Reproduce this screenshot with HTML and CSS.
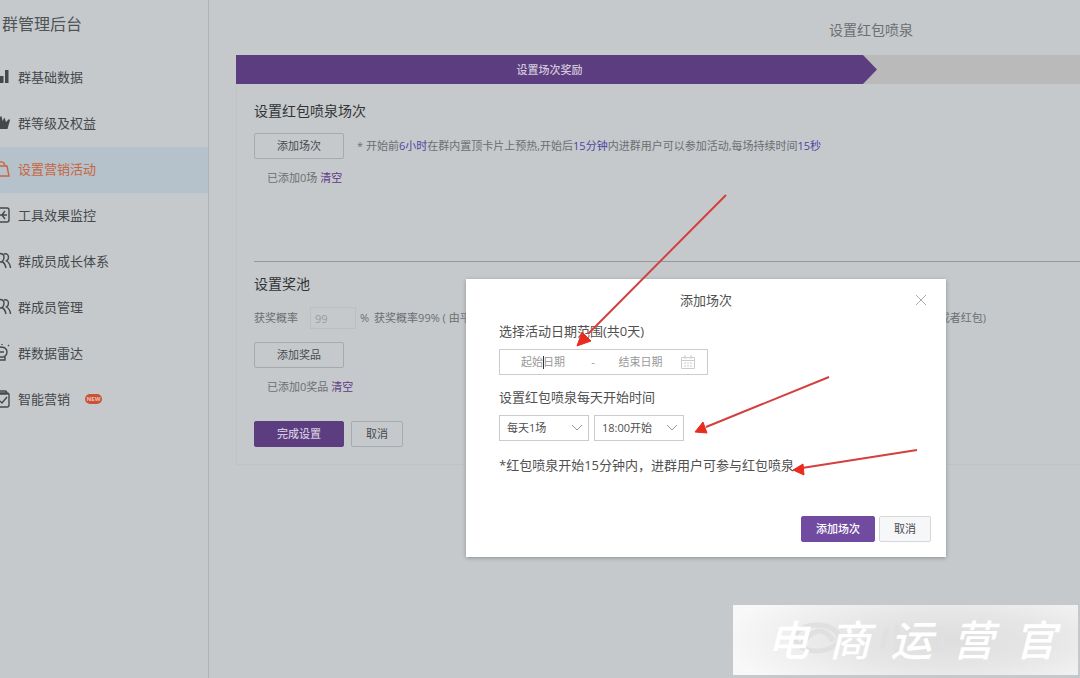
FILE: index.html
```html
<!DOCTYPE html>
<html lang="zh-CN">
<head>
<meta charset="utf-8">
<title>群管理后台</title>
<link rel="stylesheet" href="styles.css">
</head>
<body>
<div class="app">
  <aside class="sidebar">
    <h1 class="brand">群管理后台</h1>
    <nav class="menu">
      <a class="item" href="#"><svg class="icon solid" viewBox="0 0 12 18"><path d="M0 8h3.500v7H0zM5 2h3.500v13H5z"/></svg>群基础数据</a>
      <a class="item" href="#"><svg class="icon solid" viewBox="0 0 12 18"><path d="M0 7L0 3l1.500-1 1 5 2-3.500L6 8l3-3 1 1-2.500 9H0z"/></svg>群等级及权益</a>
      <a class="item active" href="#"><svg class="icon" viewBox="0 0 12 18"><path d="M0 6h7l2 10H0M0 2q4-1 5 4"/></svg>设置营销活动</a>
      <a class="item" href="#"><svg class="icon" viewBox="0 0 12 18"><path d="M0 2h7q2 0 2 2v10q0 2-2 2H0M0 9h7M2 9l3-4M2 9l3 4"/></svg>工具效果监控</a>
      <a class="item" href="#"><svg class="icon" viewBox="0 0 12 18"><path d="M0 1.500q4 0 4 4Q4 8 2 9.500 5 11 6 16M4 2q4-1 4.500 3Q8.500 8 6.500 9 10 11 10.500 16M0 10h2"/></svg>群成员成长体系</a>
      <a class="item" href="#"><svg class="icon" viewBox="0 0 12 18"><path d="M0 1.500q4 0 4 4Q4 8 2 9.500 5 11 6 16M4 2q4-1 4.500 3Q8.500 8 6.500 9 10 11 10.500 16M0 10h2"/></svg>群成员管理</a>
      <a class="item" href="#"><svg class="icon" viewBox="0 0 12 18"><path d="M0 3q7 0 7 5 0 3-2 4v4H0M0 8h4M0 13h5M8 2l1-1M2 1V0"/></svg>群数据雷达</a>
      <a class="item" href="#"><svg class="icon" viewBox="0 0 12 18"><path d="M0 3h7q2 0 2 2v10q0 2-2 2H0M0 1h5q2 0 2 3H0M0 11l2 2 5-6"/></svg>智能营销<span class="new">NEW</span></a>
    </nav>
  </aside>
  <main class="main">
    <div class="content">
      <h2 class="page-title">设置红包喷泉</h2>
      <div class="steps"><div class="step">设置场次奖励</div></div>
      <div class="panel">
        <section class="sessions">
          <h3>设置红包喷泉场次</h3>
          <div class="row">
            <button class="btn wide">添加场次</button>
            <p>* 开始前<em>6小时</em>在群内置顶卡片上预热,开始后<em>15分钟</em>内进群用户可以参加活动,每场持续时间<em>15秒</em></p>
          </div>
          <p class="added">已添加0场 <a href="#">清空</a></p>
        </section>
        <section class="pool">
          <h3>设置奖池</h3>
          <div class="rate">
            <label for="rate">获奖概率</label>
            <input id="rate" value="99" disabled>
            <span>%</span>
            <p class="rate-note"><span>获奖概率99% ( 由平台</span><span>或者红包)</span></p>
          </div>
          <button class="btn wide">添加奖品</button>
          <p class="added">已添加0奖品 <a href="#">清空</a></p>
          <div class="actions"><button class="btn wide primary">完成设置</button><button class="btn">取消</button></div>
        </section>
      </div>
    </div>
  </main>
</div>

<div class="modal" role="dialog" aria-labelledby="modal-title">
  <header class="modal-head">
    <h2 id="modal-title">添加场次</h2>
    <button class="close" aria-label="关闭"><svg viewBox="0 0 10 10"><path d="M0 0l10 10M10 0L0 10"/></svg></button>
  </header>
  <div class="modal-body">
    <label for="start">选择活动日期范围(共0天)</label>
    <div class="range">
      <span class="start-field"><input id="start" placeholder="起始日期"></span>
      <span class="dash">-</span>
      <input class="end" aria-label="结束日期" placeholder="结束日期">
      <svg class="calendar" viewBox="0 0 14 14"><path d="M.5 2.500h13v11H.5zM.5 5.500h13M4 0v4M10 0v4M3 8h2M6 8h2M9 8h2M3 11h2M6 11h2M9 11h2"/></svg>
    </div>
    <label for="count">设置红包喷泉每天开始时间</label>
    <div class="selects">
      <span class="select"><select id="count"><option>每天1场</option></select><svg viewBox="0 0 12 8"><path d="M1 1l5 5 5-5"/></svg></span>
      <span class="select"><select aria-label="开始时间"><option>18:00开始</option></select><svg viewBox="0 0 12 8"><path d="M1 1l5 5 5-5"/></svg></span>
    </div>
    <p>*红包喷泉开始15分钟内，进群用户可参与红包喷泉</p>
  </div>
  <footer class="modal-foot"><button class="btn primary">添加场次</button><button class="btn light">取消</button></footer>
</div>

<svg class="arrows" viewBox="0 0 1080 678">
  <path class="line" d="M726 195L588 334M829 377L706 427M917 450L802 468"/>
  <path class="head" d="M577 346L582 332 591 341zM695 432L703 422 707 433zM793 470L803 464 804 475z"/>
</svg>

<div class="watermark">
  <svg class="ghost" viewBox="0 0 345 70"><ellipse cx="84" cy="33" rx="22" ry="13"/><path d="M66 43q20-30 34-7M154 24l-5 20M164 20v28M176 24l5 18M190 25h20v20h-20z"/></svg>
  <span>电</span><span>商</span><span>运</span><span>营</span><span>官</span>
</div>
</body>
</html>
```
FILE: styles.css
```css
* { box-sizing: border-box; }
body, h1, h2, h3, p { margin: 0; font-weight: 400; }
body {
  position: relative;
  min-height: 100vh;
  overflow: hidden;
  background: #c5c9cc;
  color: #6c6e71;
  font: 11px/16px "Open Sans", "Noto Sans CJK SC", sans-serif;
}
button, input, select { font: inherit; color: inherit; }
a { color: #5e3a87; text-decoration: none; }
em { color: #4f43a3; font-style: normal; }

.app { display: flex; min-height: 100vh; }
.sidebar { flex: 0 0 209px; border-right: 1px solid #b0b3b6; }
.brand { height: 55px; padding: 12px 2px; font-size: 16px; line-height: 24px; color: #505356; }
.menu { padding-bottom: 16px; }
.item { display: flex; align-items: center; gap: 6px; height: 46px; padding-bottom: 2px; font-size: 13px; color: #45484b; }
.menu .active { background: #b5c1cb; color: #c9653c; }
.icon { width: 12px; height: 18px; fill: none; stroke: currentColor; stroke-width: 1.4; }
.icon.solid { fill: currentColor; stroke: none; }
.new { width: 17px; margin-left: 9px; border-radius: 5px; background: #cb5137; color: #e5c4bb; font-size: 6px; line-height: 10px; font-weight: 700; text-align: center; }

.main { flex: 1; min-width: 0; overflow: hidden; padding-left: 27px; }
.content { min-width: 1270px; }
.page-title { padding: 18px 0 13px; font-size: 14px; line-height: 24px; text-align: center; }
.steps { height: 29px; background: #bababa; }
.step {
  width: 641px;
  padding-right: 14px;
  background: #5b3d80;
  clip-path: polygon(0 0, 627px 0, 100% 50%, 627px 100%, 0 100%);
  color: #d2c8db;
  line-height: 29px;
  font-weight: 500;
  text-align: center;
}
.panel { padding: 15px 17px 17px; border: 1px solid #bfc3c6; border-top: 0; }
h3 { font-size: 14px; line-height: 24px; color: #313335; }
.sessions { height: 163px; border-bottom: 1px solid #96999c; }
.row { display: flex; align-items: center; gap: 13px; margin-top: 10px; }
.btn { height: 26px; min-width: 52px; padding: 0; border: 1px solid #a7aaad; border-radius: 2px; background: transparent; color: #484a4d; }
.btn.wide { width: 90px; }
.btn.primary { border-color: #5b3d80; background: #5b3d80; color: #d2c8db; font-weight: 500; }
.added { margin: 11px 13px 0; }
.pool { padding-top: 10px; }
.rate { display: flex; align-items: center; height: 22px; margin: 11px 0 13px; }
.rate input { width: 46px; height: 22px; margin: 0 4px 0 12px; padding: 0 4px; border: 1px solid #bbbfc2; background: transparent; color: #989b9e; }
.rate-note { display: flex; justify-content: space-between; flex: 0 0 612px; margin-left: 5px; }
.actions { display: flex; gap: 7px; margin-top: 26px; }

.modal { position: absolute; top: 279px; left: 466px; width: 480px; padding-bottom: 15px; background: #fff; box-shadow: 0 1px 4px #8d9093; color: #505050; }
.modal-head { position: relative; padding: 11px 0 9px; text-align: center; }
.modal-head h2 { font-size: 13px; line-height: 20px; }
.close { position: absolute; top: 12px; right: 16px; width: 18px; height: 18px; padding: 4px; border: 0; background: none; }
.close svg { display: block; fill: none; stroke: #aaa; }
.modal-body { padding: 0 33px; font-size: 13px; line-height: 24px; }
.modal-body > label { display: block; }
.range { display: flex; align-items: center; width: 209px; height: 26px; margin: 6px 0 10px; padding: 0 12px 0 0; border: 1px solid #ccc; font-size: 11px; color: #999; }
.range input { width: 86px; padding: 0; border: 0; outline: 0; text-align: center; }
.range .end { width: 82px; min-width: 0; }
.range input::placeholder { color: #999; }
.dash { flex: 0 0 14px; text-align: center; }
.start-field { position: relative; flex: none; }
.start-field::after { content: ""; position: absolute; top: 6px; left: 50%; height: 13px; border-left: 1px solid #333; }
.calendar { flex: none; width: 14px; height: 14px; margin-left: auto; fill: none; stroke: #ccc; }
.selects { display: flex; gap: 5px; margin: 6px 0 12px; font-size: 11px; }
.select { position: relative; width: 90px; height: 26px; }
.select select { width: 100%; height: 100%; padding: 0 7px; border: 1px solid #ccc; border-radius: 0; background: #fff; appearance: none; }
.select svg { position: absolute; top: 9px; right: 6px; width: 12px; height: 8px; fill: none; stroke: #999; pointer-events: none; }
.modal-foot { display: flex; justify-content: flex-end; gap: 4px; padding: 39px 15px 0 0; }
.modal .primary { width: 74px; border-color: #704ba0; background: #704ba0; color: #fff; }
.modal .light { border-color: #d5d7dc; background: #f6f7f9; }

.arrows { position: absolute; top: 0; left: 0; width: 1080px; height: 678px; pointer-events: none; }
.line { fill: none; stroke: #d3403d; stroke-width: 2; }
.head { fill: #e82c20; stroke: #e82c20; }

.watermark {
  position: absolute;
  top: 605px;
  left: 733px;
  display: flex;
  justify-content: space-between;
  align-items: center;
  width: 345px;
  height: 70px;
  padding: 0 22px 0 34px;
  background: radial-gradient(ellipse 65% 90% at 62% 50%, #dedede, #e6e6e6 45%, #f8f8f8);
  color: #fff;
  font-size: 42px;
  font-style: italic;
  font-weight: 500;
}
.watermark span { position: relative; }
.ghost { position: absolute; top: 0; left: 0; width: 345px; height: 70px; fill: none; stroke: #e0e0e0; stroke-width: 5; }
```
